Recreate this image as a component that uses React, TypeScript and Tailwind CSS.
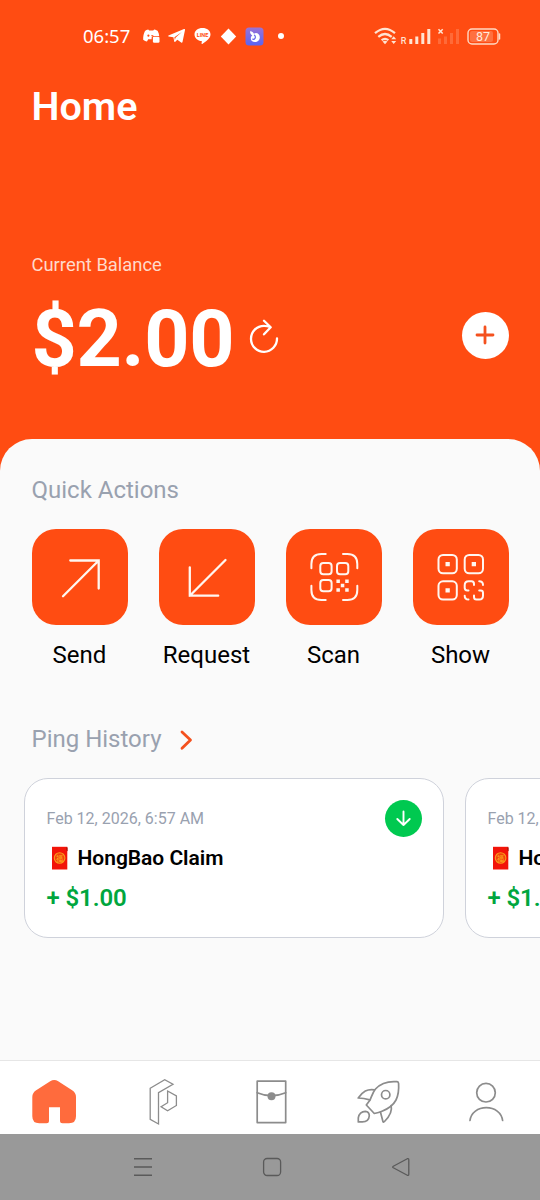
import { ReactNode } from "react";

interface IconProps {
  children: ReactNode;
}

interface HistoryItem {
  id: number;
  date: string;
  title: string;
  amount: string;
}

const history: HistoryItem[] = [
  { id: 1, date: "Feb 12, 2026, 6:57 AM", title: "HongBao Claim", amount: "+ $1.00" },
  { id: 2, date: "Feb 12, 2026, 6:57 AM", title: "HongBao Claim", amount: "+ $1.00" },
];

function StatusBar() {
  return (
    <div className="flex h-[72px] items-center pl-[83px] pr-[39px] text-white">
      <span className="w-[60px] font-['Noto_Sans'] text-[18.5px] leading-6">
        06:57
      </span>
      {/* discord */}
      <svg width="17" height="16" viewBox="0 0 17 16" fill="currentColor">
        <path d="M5.2 1.4 6.2 2.4h4l1-1c1.800.3 2.800.9 3.500 1.500.9 1.700 1.400 3.200 1.500 5H10a2 2 0 0 0-1.400 1.900v1.400H5.200l-1.200 2.400C2.300 13.200 1 12.500.2 11.700 0 8.400.7 5.200 2 2.900c.8-.7 2-1.300 3.200-1.500z" />
        <ellipse cx="5.4" cy="7.6" rx="1" ry="1.200" fill="#ff4c12" />
        <path d="M8.300 7.200h2v1h-2z" fill="#ff4c12" />
        <path d="M10.800 8.800h4.400q1.300 0 1.300 1.300v3.400q0 1.300-1.300 1.300h-4q-1.300 0-1.300-1.300V9.800q0-1 .9-1z" />
      </svg>
      {/* telegram */}
      <svg className="ml-2" width="18" height="16" viewBox="0 0 18 16" fill="currentColor">
        <path d="M.5 7.600 16 1q1.200-.4 1 .9l-2.500 12.200q-.3 1.100-1.300.5l-3.900-2.900-2 2q-.9.7-1.100-.5l-.8-3.900L.6 8.400q-.8-.4-.1-.8zM6.400 9.200l.5 3 .6-2.400 6.300-5.900z" />
      </svg>
      {/* line */}
      <svg className="ml-2" width="17" height="18" viewBox="0 0 17 18">
        <path
          d="M8.500 1C13 1 16.500 3.700 16.500 7.400c0 2.400-1.500 4.400-3.800 6.300L8.300 17c-.6.300-.8 0-.7-.6l.2-2.400C3.600 13.700.5 11 .5 7.400.5 3.700 4 1 8.500 1z"
          fill="white"
        />
        <text
          x="8.500"
          y="9.500"
          textAnchor="middle"
          fill="#ff4c12"
          className="font-['Roboto'] text-[5.500px] font-bold"
        >
          LINE
        </text>
      </svg>
      <svg className="ml-[9px]" width="17" height="17" viewBox="0 0 17 17" fill="currentColor">
        <path d="M8.500.6 16.200 8.500l-7.700 7.900L.8 8.500z" />
      </svg>
      <svg className="ml-2" width="19" height="19" viewBox="0 0 19 19">
        <defs>
          <linearGradient id="tile" x1="0" y1="0" x2="0" y2="1">
            <stop offset="0" stopColor="#9b72d4" />
            <stop offset="1" stopColor="#5964f2" />
          </linearGradient>
        </defs>
        <rect x=".5" y=".5" width="18" height="18" rx="3.5" fill="url(#tile)" />
        <path
          d="M5 4.200c2.600.2 3.600 1.300 3.900 2.500C11.500 4.800 14.800 7 14.800 10.200c0 2.900-2.100 4.900-4.900 4.900-2.600 0-4.300-1.600-4.100-3.900.1-1.200.7-2 1.500-2.600C5.900 7.600 5 6.200 5 4.200z"
          fill="white"
        />
        <path
          d="M9.500 8.200c.9.700 1.100 1.900.5 3.200q-.8 1.300-2.200.7"
          fill="none"
          stroke="#6a69ea"
          strokeWidth="1.200"
          strokeLinecap="round"
        />
      </svg>
      <span className="ml-[14px] size-1.5 rounded-full bg-white" />

      {/* wifi */}
      <svg
        className="ml-auto"
        width="24"
        height="18"
        viewBox="0 0 24 18"
        fill="none"
        stroke="#ffe4d2"
        strokeWidth="2.200"
      >
        <path d="M1 6.200Q11 -2.600 21 6.200M4.300 9.800q6.700-5.600 13.400 0M7.600 13.200q3.400-2.600 6.800 0" />
        <path d="M8.500 14.500q2.500-1.500 5 0L11 17.300z" fill="#ffe4d2" stroke="none" />
        <path d="M17.200 12.200h5L19.700 9.200zM17.200 14h5l-2.500 3z" fill="#ffe4d2" stroke="none" />
      </svg>
      <svg className="ml-0.5" width="64" height="20" viewBox="0 0 64 20" fill="#ffe4d2">
        <text x=".8" y="17.900" className="font-['Roboto'] text-[9px] font-medium">
          R
        </text>
        <path d="M9.300 13h3v5h-3zM15.300 10.500h3V18h-3zM21.300 7h3v11h-3zM27.300 3h3v15h-3z" />
        <path
          d="M38 12.500h3V18h-3zM44 10.500h3V18h-3zM50 7h3v11h-3zM56 3h3v15h-3z"
          fillOpacity=".2"
        />
        <path d="m38.500 3.300 4.200 4.200m0-4.200-4.200 4.200" stroke="#ffe4d2" strokeWidth="1.500" />
      </svg>
      {/* battery */}
      <svg className="ml-[3px]" width="34" height="17" viewBox="0 0 34 17">
        <rect x="1" y="1" width="30" height="15" rx="4" fill="none" stroke="#ffd9c4" strokeWidth="1.400" />
        <rect x="3" y="3" width="23" height="11" rx="2" fill="#ff7040" />
        <path d="M32.500 6v5" stroke="#ffd9c4" strokeWidth="1.500" strokeLinecap="round" />
        <text
          x="16"
          y="12.900"
          textAnchor="middle"
          fill="#ffeadd"
          className="font-['Roboto'] text-[12.500px]"
        >
          87
        </text>
      </svg>
    </div>
  );
}

function ActionIcon({ children }: IconProps) {
  return (
    <svg
      className="size-24"
      viewBox="0 0 96 96"
      fill="none"
      stroke="#fff6f0"
      strokeWidth="2"
      strokeLinecap="round"
      strokeLinejoin="round"
    >
      {children}
    </svg>
  );
}

const actions = [
  {
    label: "Send",
    icon: <path strokeWidth="2.300" strokeLinejoin="miter" d="M31 67.200 66.700 31.500M38.300 31.500h28.400v28" />,
  },
  {
    label: "Request",
    icon: <path strokeWidth="2.300" strokeLinejoin="miter" d="M66.500 31 30.800 66.700M30.800 38.300v28.400h28.400" />,
  },
  {
    label: "Scan",
    icon: (
      <>
        <path d="M25.400 39.200V35q0-10 10-10h4.300M57 25h4.300q10 0 10 10v4.200M71.300 56.800V61q0 10-10 10H57M39.700 71h-4.300q-10 0-10-10v-4.200" />
        <rect x="34.300" y="34" width="11.300" height="11.300" rx="3" />
        <rect x="51" y="34" width="11.300" height="11.300" rx="3" />
        <rect x="34.300" y="51" width="11.300" height="11.300" rx="3" />
        <path
          d="M50.400 50.400h3.500v3.500h-3.500zM59.200 50.400h3.500v3.500h-3.500zM54.800 54.800h3.500v3.500h-3.500zM50.400 59.200h3.500v3.500h-3.500zM59.200 59.200h3.500v3.500h-3.500z"
          fill="#fff6f0"
          stroke="none"
        />
      </>
    ),
  },
  {
    label: "Show",
    icon: (
      <>
        <rect x="25.500" y="26" width="18.300" height="18.300" rx="4.500" />
        <rect x="51.700" y="26" width="18.300" height="18.300" rx="4.500" />
        <rect x="25.500" y="52.300" width="18.300" height="18.300" rx="4.500" />
        <path
          d="M32.500 33h4.300v4.300h-4.300zM58.700 33h4.300v4.300h-4.300zM32.500 59.300h4.300v4.300h-4.300z"
          fill="#fff6f0"
          stroke="none"
        />
        <path d="M55.500 61.400h-1.200q-2.600 0-2.600-2.600v-2.500q0-4 4-4h2.800q2.500 0 2.500 2.600v1M66.200 52.300q3.800 0 3.800 3.800M51.700 66.800q0 3.800 3.800 3.800M66.200 61.400h1.500q2.300 0 2.300 2.400v3q0 3.800-3.800 3.800h-2.700q-2.500 0-2.500-2.500v-1.500" />
      </>
    ),
  },
];

function RedEnvelope() {
  return (
    <svg className="ml-1 mr-[9px] shrink-0" width="18" height="24" viewBox="0 0 18 24">
      <path d="M1 .8h15.300v22.700H1z" fill="#f21409" />
      <path d="M15.300 1.500h1.300v3.800l-1.300-1z" fill="#a5140c" />
      <circle cx="8.600" cy="12" r="5.300" fill="#f2430a" stroke="#f99a1c" strokeWidth="1.100" />
      <text
        x="8.600"
        y="14.600"
        textAnchor="middle"
        fill="#ffb01f"
        className="font-['Noto_Sans_CJK_SC',sans-serif] text-[7px]"
      >
        福
      </text>
    </svg>
  );
}

function HistoryCard({ item }: { item: HistoryItem }) {
  return (
    <div className="relative h-40 w-[420px] shrink-0 rounded-3xl border border-[#cfd2db] bg-white pl-[21.5px] pt-7">
      <p className="text-[16px] leading-6 text-[#99a1af]">{item.date}</p>
      <div className="mt-[11px] flex h-8 items-center">
        <RedEnvelope />
        <span className="text-[21px] font-semibold leading-8 tracking-[-0.03px] text-black">
          {item.title}
        </span>
      </div>
      <p className="mt-2 text-[24px] font-semibold leading-8 tracking-[-0.1px] text-[#00a63e]">
        {item.amount}
      </p>
      <span className="absolute right-[21px] top-[21px] flex size-[37px] items-center justify-center rounded-full bg-[#00c950]">
        <svg
          width="17"
          height="17"
          viewBox="0 0 17 17"
          fill="none"
          stroke="white"
          strokeWidth="1.900"
          strokeLinecap="round"
          strokeLinejoin="round"
        >
          <path d="M8.500 1.500v13.500M2.300 9l6.200 6 6.200-6" />
        </svg>
      </span>
    </div>
  );
}

function NavIcon({ children }: IconProps) {
  return (
    <svg
      className="size-12"
      viewBox="0 0 48 48"
      fill="none"
      stroke="#8c8c8c"
      strokeWidth="1.700"
      strokeLinejoin="round"
      strokeLinecap="round"
    >
      {children}
    </svg>
  );
}

function BottomNav() {
  return (
    <nav className="grid h-[74px] grid-cols-5 justify-items-center border-t border-[#e6e6e6] bg-white pt-[17px]">
      <NavIcon>
        <path
          d="M20.200 3.300q4-2.400 8 0L42.500 12.500Q46 15 46 19v19.300q0 7-7 7h-6.500q-2.500 0-2.500-2.500V29.300H19v13.500q0 2.500-2.500 2.500H9.300q-7 0-7-7V19q0-4 3.500-6.500z"
          fill="#ff6b3d"
          stroke="none"
        />
      </NavIcon>
      <NavIcon>
        <path
          strokeWidth="1.300"
          strokeLinejoin="miter"
          d="M12.200 10.300 26.700 1.700 35 6.300 20.500 14.700V46l-8.300-4.700zM29.600 13l8.800 5v9.500l-8.800 5.200-6.500-4 6.500-4z"
        />
      </NavIcon>
      <NavIcon>
        <rect x="11.200" y="3.200" width="28.500" height="41.400" />
        <path d="M11.200 14.700q14.200 6 28.500 0" />
        <circle cx="25.500" cy="18.300" r="4" fill="#8c8c8c" stroke="none" />
      </NavIcon>
      <NavIcon>
        <path d="M43 3.700C34.500 3 26.500 5.500 21.500 11c-2.800 3.200-4 8-5.600 11.300L12.300 27l8 8.500q4.500-1 7.700-2.300c6-2.300 11-5.500 14-11.200 2.400-4.800 3-10 2.600-16.500q-.1-1.600-1.600-1.800z" />
        <circle cx="31.700" cy="16.700" r="4.200" />
        <path d="M20.300 11.800C13 10.800 9 13.500 4.200 20q5.500.3 11.600 1.800M26.500 34.200l2.500 9.500q.5.800 1.500-.2c5.500-5.500 8-10.500 6.600-16M4.300 43.900v-4c.3-4 3.500-6.600 7-6.600 2.500.2 4 2 4 4.500-.3 4-3.300 6.100-7 6.100z" />
      </NavIcon>
      <NavIcon>
        <circle cx="24" cy="14.700" r="9.300" />
        <path d="M8 42.500C9 34.500 16 29.700 24.300 29.700S39.600 34.500 40.600 42.500" />
      </NavIcon>
    </nav>
  );
}

function SystemBar() {
  return (
    <div className="flex h-[66px] items-center justify-center gap-[109px] bg-[#999999] pl-1">
      <svg width="20" height="20" viewBox="0 0 20 20" stroke="#5a5a5a" strokeWidth="1.500">
        <path d="M1 1.700h18M1 10h18M1 18.200h18" />
      </svg>
      <svg width="20" height="20" viewBox="0 0 20 20" fill="none" stroke="#5a5a5a" strokeWidth="1.300">
        <rect x="1.600" y="1.500" width="17" height="17" rx="3.500" />
      </svg>
      <svg
        width="20"
        height="20"
        viewBox="0 0 20 20"
        fill="none"
        stroke="#5a5a5a"
        strokeWidth="1.300"
        strokeLinejoin="round"
      >
        <path d="M2.300 9.200 16.300 1.700q1.500-.5 1.500 1v14.600q0 1.500-1.500 1L2.300 10.800q-1.300-.8 0-1.600z" />
      </svg>
    </div>
  );
}

export default function App() {
  return (
    <div className="flex h-[1200px] w-[540px] flex-col overflow-hidden bg-[#ff4c12] font-['Roboto',sans-serif]">
      <StatusBar />
      <header className="h-[367px] px-[31.5px] pt-[11px] text-white">
        <h1 className="text-[39.5px] font-semibold leading-12">Home</h1>
        <p className="mt-[122px] text-[18.4px] leading-6 text-[#ffdacb]">Current Balance</p>
        <div className="mt-2.5 flex h-24 items-center">
          <span className="pt-2 text-[79px] font-bold leading-24 tracking-[-0.3px]">$2.00</span>
          <svg
            className="ml-[14px] mt-1"
            width="32"
            height="36"
            viewBox="0 0 32 36"
            fill="none"
            stroke="white"
            strokeWidth="2.300"
            strokeLinecap="round"
            strokeLinejoin="round"
          >
            <path d="M29 19.500A13 13 0 1 1 16 6.800q3.500 0 6.500 1.400M16 1.700l6.700 6.600-6.700 7" />
          </svg>
          <button className="ml-auto flex size-[47px] items-center justify-center rounded-full bg-white">
            <svg width="20" height="20" viewBox="0 0 20 20" stroke="#f4511e" strokeWidth="2.800" strokeLinecap="round">
              <path d="M10 2v16M2 10h16" />
            </svg>
          </button>
        </div>
      </header>

      <main className="flex-1 overflow-hidden rounded-t-[32px] bg-[#fafafa]">
        <h2 className="px-[31.5px] pt-[35px] text-[24px] leading-8 text-[#99a1af]">Quick Actions</h2>
        <div className="mt-[23px] flex justify-between px-[31.5px]">
          {actions.map((action) => (
            <div key={action.label} className="flex w-24 flex-col items-center">
              <div className="size-24 rounded-3xl bg-[#ff4c12]">
                <ActionIcon>{action.icon}</ActionIcon>
              </div>
              <span className="mt-[13.5px] text-[24px] leading-8 text-black">{action.label}</span>
            </div>
          ))}
        </div>

        <div className="mt-[52px] flex items-center px-[31.5px]">
          <h2 className="text-[24px] leading-8 text-[#99a1af]">Ping History</h2>
          <svg
            className="ml-[17px] mt-0.5"
            width="15"
            height="22"
            viewBox="0 0 15 22"
            fill="none"
            stroke="#f4511e"
            strokeWidth="2.800"
            strokeLinecap="round"
            strokeLinejoin="round"
          >
            <path d="m3 3 8.500 8L3 19.300" />
          </svg>
        </div>
        <div className="mt-[23.5px] flex gap-[21px] overflow-hidden pl-6">
          {history.map((item) => (
            <HistoryCard key={item.id} item={item} />
          ))}
        </div>
      </main>

      <BottomNav />
      <SystemBar />
    </div>
  );
}
